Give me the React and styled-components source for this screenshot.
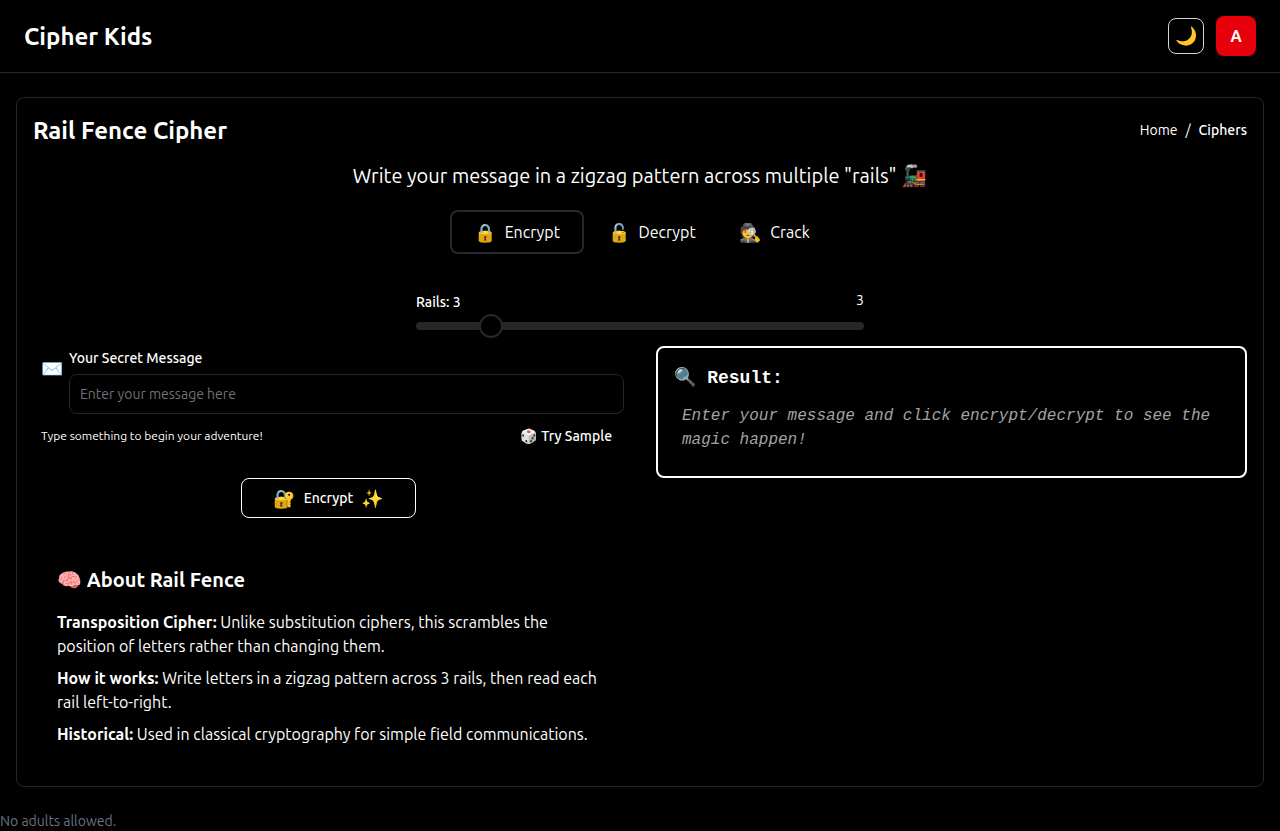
import React from "react";
import styled, { createGlobalStyle } from "styled-components";

const sans = `Ubuntu, "Open Sans", "Noto Sans", "Noto Color Emoji", sans-serif`;
const mono = `"Liberation Mono", "Noto Color Emoji", monospace`;

const Global = createGlobalStyle`
  * { box-sizing: border-box; }
  html, body { margin: 0; background: #000; }
  body { font-family: ${sans}; color: #fff; }
`;

const Page = styled.div`
  min-height: 831px;
  background: #000;
`;

const Navbar = styled.header`
  height: 73px;
  padding: 0 24px;
  display: flex;
  align-items: center;
  justify-content: space-between;
  border-bottom: 1px solid #27272a;
`;

const Brand = styled.div`
  font-size: 24px;
  font-weight: 700;
`;

const NavActions = styled.div`
  display: flex;
  align-items: center;
  gap: 12px;
`;

const ThemeButton = styled.button`
  width: 36px;
  height: 36px;
  padding: 0;
  background: #000;
  border: 1px solid #d4d4d8;
  border-radius: 8px;
  font-size: 18px;
  display: flex;
  align-items: center;
  justify-content: center;
`;

const Avatar = styled.div`
  width: 40px;
  height: 40px;
  border-radius: 8px;
  background: #e7000b;
  color: #fff;
  font-size: 16px;
  font-weight: 700;
  display: flex;
  align-items: center;
  justify-content: center;
`;

const Card = styled.main`
  margin: 24px 16px 0;
  height: 690px;
  padding: 16px;
  border: 1px solid #27272a;
  border-radius: 8px;
`;

const CardHead = styled.div`
  display: flex;
  align-items: center;
  justify-content: space-between;
  height: 32px;
`;

const Title = styled.h1`
  margin: 0;
  font-size: 24px;
  font-weight: 700;
`;

const Crumbs = styled.nav`
  display: flex;
  gap: 8px;
  font-size: 14px;
  color: #fff;
`;

const CrumbCurrent = styled.span`
  font-weight: 500;
`;

const Subtitle = styled.p`
  margin: 15px 0 0;
  height: 31px;
  font-size: 20px;
  line-height: 30px;
  text-align: center;
`;

const SubtitleIcon = styled.span`
  font-size: 21px;
  line-height: 0;
`;

const Tabs = styled.div`
  margin-top: 18px;
  padding-left: 4px;
  display: flex;
  justify-content: center;
`;

const Tab = styled.button`
  height: 44px;
  padding: 0 22px 0 ${({ $tight }) => ($tight ? "18px" : "22px")};
  display: flex;
  align-items: center;
  gap: 8px;
  background: transparent;
  color: #fff;
  font-family: ${sans};
  font-size: 16px;
  border: 2px solid ${({ $active }) => ($active ? "#27272a" : "transparent")};
  border-radius: 8px;
`;

const TabIcon = styled.span`
  font-size: 18px;
`;

const SliderWrap = styled.div`
  width: 448px;
  margin: 37px auto 0;
`;

const SliderLabels = styled.div`
  display: flex;
  justify-content: space-between;
  font-size: 14px;
  font-weight: 500;
  height: 23px;
  padding-top: 3px;
`;

const SliderValue = styled.span`
  margin-top: -2px;
  font-weight: 400;
`;

const Track = styled.div`
  position: relative;
  height: 8px;
  margin-top: 8px;
  border-radius: 4px;
  background: #27272a;
`;

const Thumb = styled.span`
  position: absolute;
  left: 63px;
  top: -8px;
  width: 24px;
  height: 24px;
  border-radius: 50%;
  background: #000;
  border: 2px solid #27272a;
`;

const Columns = styled.div`
  margin-top: 16px;
  display: grid;
  grid-template-columns: 1fr 1fr;
  gap: 32px;
  align-items: start;
`;

const Left = styled.div`
  display: flex;
  flex-direction: column;
`;

const FieldRow = styled.div`
  padding: 0 0 0 8px;
  display: flex;
  align-items: flex-start;
  gap: 6px;
`;

const FieldIcon = styled.span`
  font-size: 18px;
  line-height: 24px;
  margin-top: 10px;
  width: 22px;
`;

const Field = styled.div`
  flex: 1;
`;

const FieldLabel = styled.label`
  display: block;
  font-size: 14px;
  line-height: 20px;
  height: 28px;
  padding-top: 2px;
  font-weight: 500;
`;

const Input = styled.input`
  display: block;
  width: 100%;
  height: 40px;
  padding: 0 10px;
  background: #000;
  border: 1px solid #27272a;
  border-radius: 8px;
  color: #fff;
  font-family: ${sans};
  font-size: 14px;
  &::placeholder { color: #71717a; }
`;

const HintRow = styled.div`
  margin-top: 8px;
  padding: 0 12px 0 8px;
  height: 28px;
  display: flex;
  align-items: center;
  justify-content: space-between;
`;

const Hint = styled.span`
  font-size: 12px;
  line-height: 16px;
  margin-top: -1px;
`;

const SampleButton = styled.button`
  background: none;
  border: none;
  padding: 0;
  color: #fff;
  font-family: ${sans};
  font-size: 14px;
  font-weight: 500;
`;

const SubmitButton = styled.button`
  align-self: center;
  margin-top: 28px;
  width: 175px;
  height: 40px;
  display: flex;
  align-items: center;
  justify-content: center;
  gap: 8px;
  background: #000;
  color: #fff;
  font-family: ${sans};
  font-size: 14px;
  font-weight: 500;
  border: 1px solid #fff;
  border-radius: 8px;
`;

const ButtonIcon = styled.span`
  font-size: 18px;
`;

const ResultBox = styled.section`
  height: 132px;
  padding: 16px;
  background: #000;
  border: 2px solid #fff;
  border-radius: 8px;
`;

const ResultTitle = styled.h3`
  margin: 0;
  font-family: ${mono};
  font-size: 18px;
  line-height: 28px;
  font-weight: 700;
`;

const ResultText = styled.p`
  margin: 12px 0 0;
  padding-left: 8px;
  font-family: ${mono};
  font-size: 16px;
  line-height: 24px;
  font-style: italic;
  color: #a3a3a3;
`;

const About = styled.section`
  margin-top: 48px;
  padding: 0 24px;
`;

const AboutTitle = styled.h2`
  margin: 0 0 16px;
  font-size: 20px;
  line-height: 28px;
  font-weight: 700;
`;

const AboutText = styled.p`
  margin: 0 0 8px;
  font-size: 16px;
  line-height: 24px;
  b { font-weight: 700; }
`;

const Footer = styled.footer`
  margin-top: 26px;
  font-size: 14px;
  color: #6a7282;
`;

export default function App() {
  return (
    <Page>
      <Global />
      <Navbar>
        <Brand>Cipher Kids</Brand>
        <NavActions>
          <ThemeButton>🌙</ThemeButton>
          <Avatar>A</Avatar>
        </NavActions>
      </Navbar>
      <Card>
        <CardHead>
          <Title>Rail Fence Cipher</Title>
          <Crumbs>
            <span>Home</span>
            <span>/</span>
            <CrumbCurrent>Ciphers</CrumbCurrent>
          </Crumbs>
        </CardHead>
        <Subtitle>Write your message in a zigzag pattern across multiple "rails" <SubtitleIcon>🚂</SubtitleIcon></Subtitle>
        <Tabs>
          <Tab $active><TabIcon>🔒</TabIcon>Encrypt</Tab>
          <Tab><TabIcon>🔓</TabIcon>Decrypt</Tab>
          <Tab $tight><TabIcon>🕵️</TabIcon>Crack</Tab>
        </Tabs>
        <SliderWrap>
          <SliderLabels>
            <span>Rails: 3</span>
            <SliderValue>3</SliderValue>
          </SliderLabels>
          <Track><Thumb /></Track>
        </SliderWrap>
        <Columns>
          <Left>
            <FieldRow>
              <FieldIcon>✉️</FieldIcon>
              <Field>
                <FieldLabel>Your Secret Message</FieldLabel>
                <Input placeholder="Enter your message here" />
              </Field>
            </FieldRow>
            <HintRow>
              <Hint>Type something to begin your adventure!</Hint>
              <SampleButton>🎲 Try Sample</SampleButton>
            </HintRow>
            <SubmitButton><ButtonIcon>🔐</ButtonIcon>Encrypt<ButtonIcon>✨</ButtonIcon></SubmitButton>
            <About>
              <AboutTitle>🧠 About Rail Fence</AboutTitle>
              <AboutText><b>Transposition Cipher:</b> Unlike substitution ciphers, this scrambles the position of letters rather than changing them.</AboutText>
              <AboutText><b>How it works:</b> Write letters in a zigzag pattern across 3 rails, then read each rail left-to-right.</AboutText>
              <AboutText><b>Historical:</b> Used in classical cryptography for simple field communications.</AboutText>
            </About>
          </Left>
          <ResultBox>
            <ResultTitle>🔍 Result:</ResultTitle>
            <ResultText>Enter your message and click encrypt/decrypt to see the magic happen!</ResultText>
          </ResultBox>
        </Columns>
      </Card>
      <Footer>No adults allowed.</Footer>
    </Page>
  );
}
